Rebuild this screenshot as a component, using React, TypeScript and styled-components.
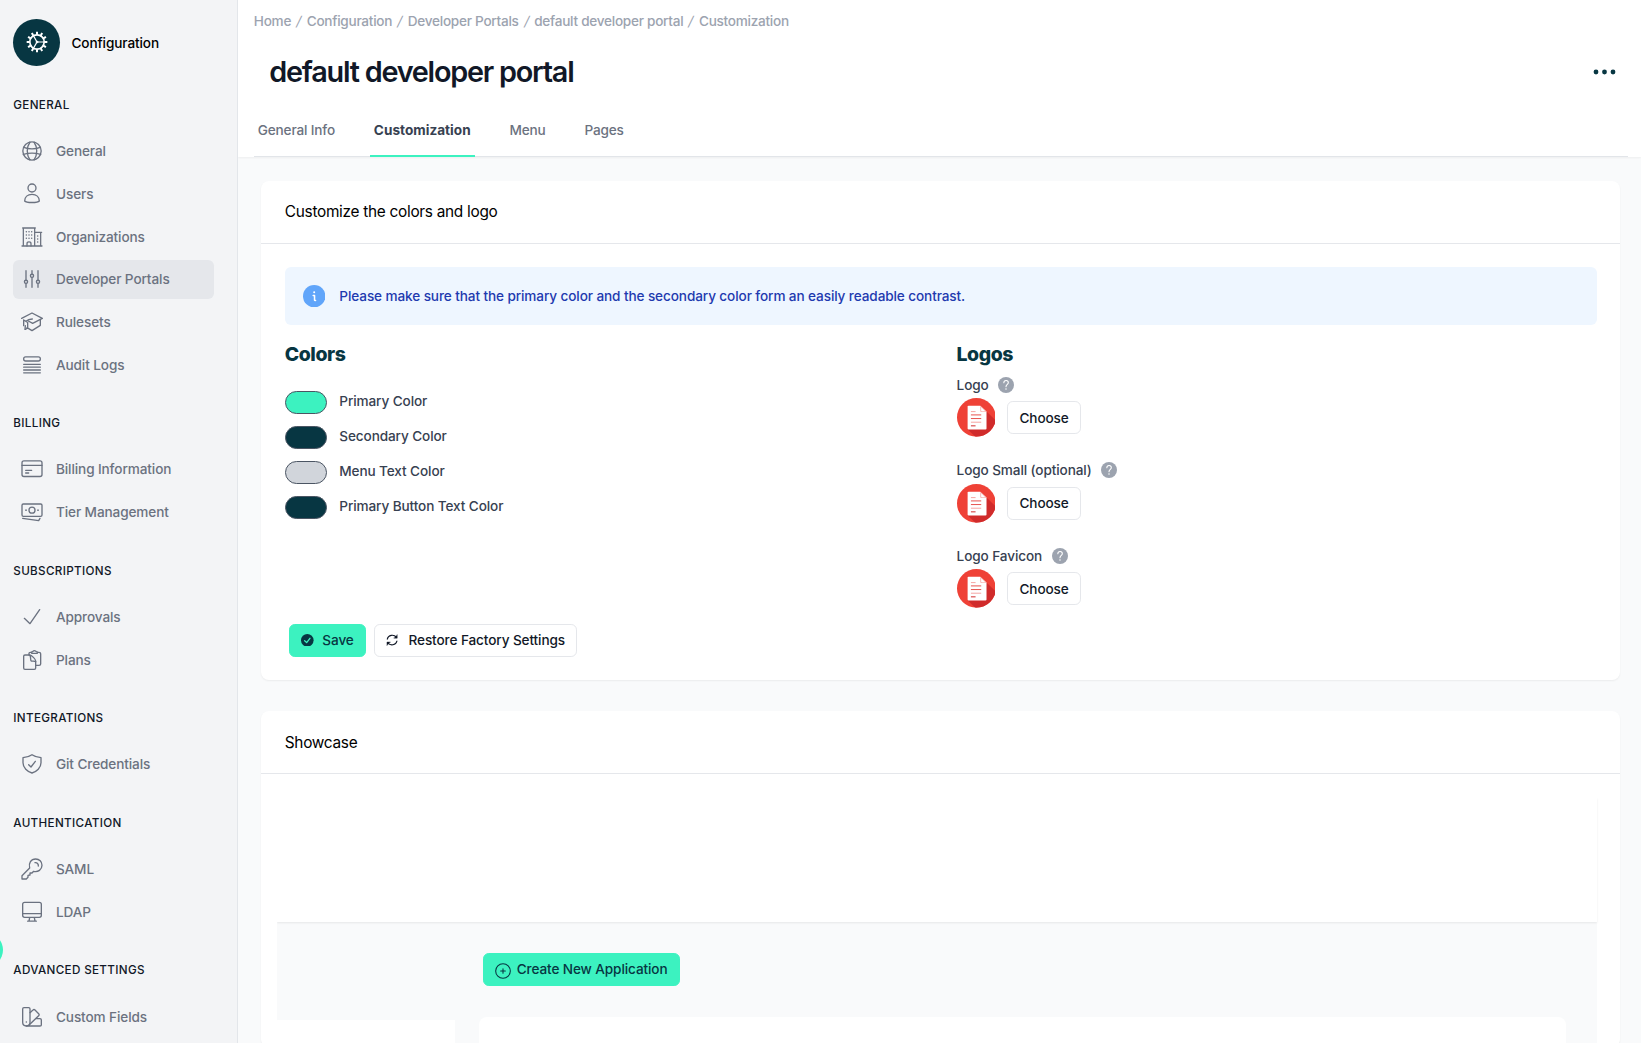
import React from "react";
import styled, { createGlobalStyle } from "styled-components";

const GlobalStyle = createGlobalStyle`
  *, *::before, *::after { box-sizing: border-box; }
  body {
    margin: 0;
    overflow: hidden;
    background: #f9fafb;
    color: #111827;
    font-family: Inter, "Liberation Sans", sans-serif;
    font-size: 13.6px;
    font-weight: 500;
    letter-spacing: -0.11px;
  }
  button { font: inherit; letter-spacing: inherit; margin: 0; }
`;

const Page = styled.div`
  display: grid;
  grid-template-columns: 238.3px 1fr;
  height: 1043px;
  overflow: hidden;
  position: relative;
`;

/* ---------- sidebar ---------- */

const Sidebar = styled.aside`
  background: #f3f4f6;
  border-right: 1px solid #e3e6ea;
  padding: 19px 23px 0 13.3px;
  overflow: hidden;
  min-height: 0;
`;

const Brand = styled.div`
  display: flex;
  align-items: center;
  gap: 11.4px;
  height: 47px;
  margin-bottom: 31.8px;
  color: #000;
`;

const Avatar = styled.span`
  display: flex;
  align-items: center;
  justify-content: center;
  width: 46.8px;
  height: 46.8px;
  border-radius: 50%;
  background: #073642;
  color: #fff;
`;

const Section = styled.section`
  margin-bottom: 32px;
`;

const SectionTitle = styled.h3`
  margin: 0 0 18.5px;
  height: 15.5px;
  line-height: 15.5px;
  font-size: 11.65px;
  font-weight: 500;
  letter-spacing: 0.34px;
  text-transform: uppercase;
  color: #111827;
`;

const NavList = styled.nav`
  display: flex;
  flex-direction: column;
  gap: 3.9px;
`;

const NavItem = styled.a<{ $active?: boolean }>`
  display: flex;
  align-items: center;
  gap: 12.8px;
  height: 38.8px;
  width: 200.7px;
  padding-left: 7.9px;
  border-radius: 5.8px;
  color: #6b7280;
  background: ${(p) => (p.$active ? "#e5e7eb" : "transparent")};
`;

const Beacon = styled.span`
  position: absolute;
  left: -31.2px;
  top: 933px;
  width: 34px;
  height: 34px;
  border-radius: 50%;
  background: #3cf2c0;
`;

/* ---------- header ---------- */

const Main = styled.main`
  display: flex;
  flex-direction: column;
  min-width: 0;
  min-height: 0;
  overflow: hidden;
`;

const Header = styled.header`
  height: 157px;
  flex: none;
  padding: 0 13.5px 0 15.5px;
  background: #fff;
  box-shadow: 0 1px 2px rgba(0, 0, 0, 0.05);
  display: flex;
  flex-direction: column;
`;

const Breadcrumbs = styled.nav`
  display: flex;
  height: 42px;
  align-items: center;
  color: #9ca3af;
  font-weight: 450;
  letter-spacing: -0.27px;
`;

const Slash = styled.span`
  width: 15.6px;
  text-align: center;
  font-size: 13.6px;
  font-weight: 400;
  transform: skewX(-12deg);
`;

const TitleRow = styled.div`
  display: flex;
  align-items: center;
  justify-content: space-between;
  height: 59px;
  padding: 0 11.7px 0 15.5px;
`;

const Title = styled.h1`
  margin: 0;
  font-size: 28.8px;
  font-weight: 600;
  line-height: 35px;
  letter-spacing: -1.23px;
`;

const Tabs = styled.div`
  display: flex;
  gap: 31px;
  height: 56px;
  border-bottom: 1px solid #e2e5e9;
`;

const Tab = styled.a<{ $active?: boolean }>`
  display: flex;
  align-items: center;
  height: 56px;
  padding: 3.4px 3.9px 0;
  border-bottom: 2px solid ${(p) => (p.$active ? "#3cf2c0" : "transparent")};
  color: ${(p) => (p.$active ? "#374151" : "#6b7280")};
  font-weight: ${(p) => (p.$active ? 700 : 500)};
  letter-spacing: ${(p) => (p.$active ? 0.02 : -0.15)}px;
`;

/* ---------- cards ---------- */

const Content = styled.div`
  flex: 1;
  min-height: 0;
  padding: 23.5px 21px 0 23.2px;
`;

const Card = styled.section`
  margin-bottom: 31px;
  background: #fff;
  border-radius: 8px;
  box-shadow: 0 1px 2px rgba(0, 0, 0, 0.06);
`;

const CardTitle = styled.h2<{ $line: number }>`
  margin: 0;
  height: 63px;
  padding: 0 23.3px;
  line-height: ${(p) => p.$line}px;
  font-size: 15.4px;
  font-weight: 400;
  letter-spacing: -0.29px;
  color: #000;
  border-bottom: 1px solid #e5e7eb;
`;

const CardBody = styled.div`
  height: 436.5px;
  padding: 23.5px 23px 0 23.3px;
`;

const Notice = styled.div`
  display: flex;
  align-items: center;
  gap: 14.2px;
  height: 58px;
  padding-left: 18px;
  border-radius: 6px;
  background: #eef6ff;
  color: #1e3aaf;
`;

const Columns = styled.div`
  display: grid;
  grid-template-columns: 671.8px 1fr;
  height: 298.6px;
`;

const GroupTitle = styled.h3<{ $gap: number }>`
  margin: 14.5px 0 ${(p) => p.$gap}px;
  height: 28px;
  line-height: 28px;
  font-size: 19.4px;
  font-weight: 800;
  letter-spacing: -0.42px;
  color: #073642;
`;

const ColorRow = styled.label`
  display: flex;
  gap: 11.8px;
  height: 23px;
  margin-bottom: 12px;
  line-height: 21px;
  color: #374151;
`;

const Swatch = styled.span<{ $color: string }>`
  width: 42.7px;
  height: 23px;
  border: 1px solid #4b5563;
  border-radius: 12px;
  background: ${(p) => p.$color};
`;

const LogoField = styled.div`
  height: 85.5px;
`;

const LogoLabel = styled.div`
  display: flex;
  align-items: center;
  gap: 9.6px;
  height: 19px;
  margin-bottom: 4.4px;
  color: #374151;
`;

const LogoPicker = styled.div`
  display: flex;
  align-items: center;
  gap: 11.7px;
  height: 39px;
`;

const Button = styled.button<{ $primary?: boolean; $gap?: number }>`
  display: inline-flex;
  align-items: center;
  gap: ${(p) => p.$gap ?? 9.6}px;
  height: 33px;
  padding: 0 11.4px;
  border: 1px solid ${(p) => (p.$primary ? "#3cf2c0" : "#e5e7eb")};
  border-radius: 5.8px;
  background: ${(p) => (p.$primary ? "#3cf2c0" : "#fff")};
  color: ${(p) => (p.$primary ? "#073642" : "#111827")};
  white-space: nowrap;
`;

const Actions = styled.div`
  display: flex;
  gap: 7.8px;
  padding-left: 4px;
`;

/* ---------- showcase ---------- */

const Preview = styled.div`
  margin: 23.5px 23px 0 15.5px;
  background: #f9fafb;
`;

const PreviewHeader = styled.div`
  height: 124.9px;
  background: #fff;
  box-shadow: 0 1px 2px rgba(0, 0, 0, 0.08);
  clip-path: inset(0 -3px -3px 0);
`;

const PreviewBody = styled.div`
  display: grid;
  grid-template-columns: 178.5px 1086.6px;
  column-gap: 23.6px;
  height: 125px;
`;

const PreviewAside = styled.div`
  margin-top: 97.5px;
  background: #fff;
`;

const PreviewMain = styled.div`
  display: flex;
  flex-direction: column;
  align-items: flex-start;
  padding-top: 30.3px;

  button { margin-left: 3.6px; }
`;

const PreviewPanel = styled.div`
  width: 100%;
  flex: 1;
  margin-top: 31px;
  border-radius: 8px 8px 0 0;
  background: #fff;
`;

/* ---------- icons ---------- */

const IconSvg = styled.svg`
  flex: none;
  fill: none;
  stroke: currentColor;
  stroke-linecap: round;
  stroke-linejoin: round;
`;

const Icon = ({ children, size = 22, sw = 4 }: { children: React.ReactNode; size?: number; sw?: number }) => (
  <IconSvg width={size} height={size} viewBox="0 0 66 66" strokeWidth={sw}>
    {children}
  </IconSvg>
);

const teeth = Array.from({ length: 12 }, (_, i) => i * 30);

const GearIcon = () => (
  <Icon sw={5}>
    <circle cx="33" cy="33" r="21.500" />
    {teeth.map((a) => (
      <path key={a} d="M33 11V2" strokeWidth="6" strokeLinecap="butt" transform={`rotate(${a} 33 33)`} />
    ))}
    <path d="M33 33H53M33 33L23 15.500M33 33L23 50.500" strokeWidth="3.600" />
    <circle cx="33" cy="33" r="3" fill="currentColor" strokeWidth="2" />
  </Icon>
);

const GlobeIcon = () => (
  <Icon>
    <circle cx="33" cy="33" r="27.500" />
    <path d="M27 6C16 22 16 44 27 60M39 6C50 22 50 44 39 60" />
    <path d="M8 22C22 27 44 27 58 22M7 43C22 39 44 39 59 43" />
  </Icon>
);

const UserIcon = () => (
  <Icon>
    <circle cx="33" cy="15" r="12" />
    <path d="M11 54C11 42 20 34 33 34S55 42 55 54C50 60 16 60 11 54Z" />
  </Icon>
);

const BuildingIcon = () => (
  <Icon sw={3.8}>
    <path d="M3 60H63M7 60V6H41V60M5 6H43M41 19H59V60M41 19H62" />
    <path d="M18 60V53C18 46 30 46 30 53V60" />
    <path d="M16 17h.1M24 17h.1M32 17h.1M16 27h.1M24 27h.1M32 27h.1M16 37h.1M24 37h.1M32 37h.1M50 30h.1M50 39h.1M50 48h.1" strokeWidth="4.500" />
  </Icon>
);

const SlidersIcon = () => (
  <Icon>
    <path d="M15 8V36M15 47V58M33 8V18M33 29V58M51 8V36M51 47V58" />
    <circle cx="15" cy="41.500" r="4.800" />
    <circle cx="33" cy="23.500" r="4.800" />
    <circle cx="51" cy="41.500" r="4.800" />
  </Icon>
);

const CapIcon = () => (
  <Icon>
    <path d="M2 22L33 6L64 22L35 37L22 30" />
    <path d="M58 27V43L33 59L18 50M8 27V44M8 27L20 34V51L13 55M34 24C26 24 20 26 15 31" />
    <path d="M13 44L12 55" />
  </Icon>
);

const LogsIcon = () => (
  <Icon>
    <rect x="8" y="8.500" width="50" height="12.500" rx="6" />
    <path d="M8 31H58M8 39.500H58M8 48H58M8 56.500H58" />
  </Icon>
);

const CreditCardIcon = () => (
  <Icon>
    <rect x="3" y="8.500" width="60" height="47" rx="6" />
    <path d="M3 22H63M14 37H32M14 45H23" />
  </Icon>
);

const CashIcon = () => (
  <Icon>
    <rect x="3" y="9" width="60" height="37" rx="4" />
    <circle cx="33" cy="27.500" r="9" />
    <path d="M15 27.500h.1M51 27.500h.1" strokeWidth="5" />
    <path d="M5 52L53 59L57 52" />
  </Icon>
);

const CheckIcon = () => (
  <Icon>
    <path d="M10 37L27 53L56 11" />
  </Icon>
);

const PlansIcon = () => (
  <Icon>
    <path d="M26 18H12C9 18 8 19 8 22V57C8 60 9 61 12 61H40C43 61 44 60 44 57V36C44 31 32 18 26 18Z" />
    <path d="M27 19C30 25 28 33 30 35S39 36 44 38M24 18V13C24 11 26 10 28 10H31M50 10H54C57 10 59 11 59 14V45C59 48 57 49 54 49H45" />
    <path d="M32 13V9C35 9 36 5 40 5S45 9 49 9V13Z" />
  </Icon>
);

const ShieldIcon = () => (
  <Icon>
    <path d="M33 5C25 11 15 13 6 14V29C6 44 19 56 33 60C47 56 60 44 60 29V14C51 13 41 11 33 5Z" />
    <path d="M23 35L30 42L43 25" />
  </Icon>
);

const KeyIcon = () => (
  <Icon>
    <path d="M3 63V53L26 30C22 15 30 3 44 3C55 3 63 11 63 22C63 35 51 43 38 40L33 45H27V51L21 52V58L16 63Z" />
    <path d="M42 14C48 13 53 18 52 24" />
  </Icon>
);

const MonitorIcon = () => (
  <Icon>
    <rect x="5" y="4" width="56" height="45" rx="6" />
    <path d="M5 38H61M26 50L24 60M40 50L42 60M20 60.500H46" />
  </Icon>
);

const SwatchesIcon = () => (
  <Icon>
    <path d="M9 5H23C26 5 27 6 27 9V49C27 56 23 60 16 60S5 56 5 49V9C5 6 6 5 9 5Z" />
    <path d="M27 20L36 12C38 10 40 10 42 12L53 23C55 25 55 27 53 29L25 56M44 38H57C60 38 61 39 61 42V57C61 60 60 60 57 60H16" />
    <path d="M16 48h.1" strokeWidth="4.500" />
  </Icon>
);

const InfoIcon = () => (
  <IconSvg width="22.4" height="22.4" viewBox="0 0 66 66">
    <circle cx="33" cy="33" r="33" fill="#60a5fa" stroke="none" />
    <circle cx="33" cy="21.500" r="3" fill="#fff" stroke="none" />
    <path d="M30 31H34V45C34 46 35 46 37 46" stroke="#fff" strokeWidth="4.500" />
  </IconSvg>
);

const HelpIcon = () => (
  <IconSvg width="16" height="16" viewBox="0 0 48 48">
    <circle cx="24" cy="24" r="24" fill="#9ca3af" stroke="none" />
    <path d="M17.500 17C18 8 31 9 31 17C31 22 24 22 24 29" stroke="#fff" strokeWidth="3.200" />
    <circle cx="24" cy="36" r="2.300" fill="#fff" stroke="none" />
  </IconSvg>
);

const DocumentLogo = () => (
  <IconSvg width="38.8" height="38.8" viewBox="0 0 117 117">
    <defs>
      <clipPath id="disc"><circle cx="58.500" cy="58.500" r="58.500" /></clipPath>
    </defs>
    <g clipPath="url(#disc)" stroke="none">
      <rect width="117" height="117" fill="#ef4136" />
      <path d="M89 41L117 68V117H55L32 94Z" fill="#d02b2b" />
      <path d="M35 23H70L89 41V92C89 94 88 95 86 95H35C33 95 32 94 32 92V26C32 24 33 23 35 23Z" fill="#fff" />
      <path d="M70 23L89 42H73C71 42 70 41 70 39Z" fill="#f7b9b6" />
      <path d="M73 28L85 40H75C73 40 73 39 73 38Z" fill="#fff" />
    </g>
    <g strokeWidth="3" strokeLinecap="butt">
      <path d="M42 41H56M42 73H73" stroke="#f5a5a1" />
      <path d="M42 51H73M42 62H73" stroke="#e6524e" />
      <path d="M42 84H56" stroke="#d02b2b" />
    </g>
  </IconSvg>
);

const CheckBadgeIcon = () => (
  <IconSvg width="12.6" height="12.6" viewBox="0 0 38 38">
    <circle cx="19" cy="19" r="19" fill="#073642" stroke="none" />
    <path d="M11 20.500L17 26L27 13" stroke="#3cf2c0" strokeWidth="4" />
  </IconSvg>
);

const RefreshIcon = () => (
  <IconSvg width="12.2" height="12.2" viewBox="0 0 38 38" strokeWidth="3.400">
    <path d="M4 16C7 3 24 0 32 10M34 22C31 35 14 38 6 28" />
    <path d="M35 3V13H25ZM3 35V25H13Z" fill="currentColor" strokeWidth="1.200" />
  </IconSvg>
);

const PlusCircle = styled(IconSvg)`
  position: relative;
  top: 2px;
`;

const PlusCircleIcon = () => (
  <PlusCircle width="16" height="16" viewBox="0 0 48 48" strokeWidth="3.200">
    <circle cx="24" cy="24" r="22" />
    <path d="M24 17V31M17 24H31" />
  </PlusCircle>
);

const MoreIcon = () => (
  <IconSvg width="23" height="6" viewBox="0 0 23 6">
    <g fill="#073642" stroke="none">
      <circle cx="3" cy="3" r="2.400" />
      <circle cx="11.500" cy="3" r="2.400" />
      <circle cx="20" cy="3" r="2.400" />
    </g>
  </IconSvg>
);

/* ---------- data ---------- */

const sections = [
  {
    title: "General",
    items: [
      { label: "General", icon: <GlobeIcon /> },
      { label: "Users", icon: <UserIcon /> },
      { label: "Organizations", icon: <BuildingIcon /> },
      { label: "Developer Portals", icon: <SlidersIcon />, active: true },
      { label: "Rulesets", icon: <CapIcon /> },
      { label: "Audit Logs", icon: <LogsIcon /> },
    ],
  },
  {
    title: "Billing",
    items: [
      { label: "Billing Information", icon: <CreditCardIcon /> },
      { label: "Tier Management", icon: <CashIcon /> },
    ],
  },
  {
    title: "Subscriptions",
    items: [
      { label: "Approvals", icon: <CheckIcon /> },
      { label: "Plans", icon: <PlansIcon /> },
    ],
  },
  { title: "Integrations", items: [{ label: "Git Credentials", icon: <ShieldIcon /> }] },
  {
    title: "Authentication",
    items: [
      { label: "SAML", icon: <KeyIcon /> },
      { label: "LDAP", icon: <MonitorIcon /> },
    ],
  },
  { title: "Advanced Settings", items: [{ label: "Custom Fields", icon: <SwatchesIcon /> }] },
] as { title: string; items: { label: string; icon: React.ReactNode; active?: boolean }[] }[];

const crumbs = ["Home", "Configuration", "Developer Portals", "default developer portal", "Customization"];
const tabs = ["General Info", "Customization", "Menu", "Pages"];
const colors = [
  { label: "Primary Color", value: "#3cf2c0" },
  { label: "Secondary Color", value: "#073642" },
  { label: "Menu Text Color", value: "#d1d5db" },
  { label: "Primary Button Text Color", value: "#073642" },
];
const logos = ["Logo", "Logo Small (optional)", "Logo Favicon"];

export default function App() {
  return (
    <>
      <GlobalStyle />
      <Page>
        <Sidebar>
          <Brand>
            <Avatar><GearIcon /></Avatar>
            Configuration
          </Brand>
          {sections.map((s) => (
            <Section key={s.title}>
              <SectionTitle>{s.title}</SectionTitle>
              <NavList>
                {s.items.map((i) => (
                  <NavItem key={i.label} $active={i.active}>
                    {i.icon}
                    {i.label}
                  </NavItem>
                ))}
              </NavList>
            </Section>
          ))}
        </Sidebar>
        <Main>
          <Header>
            <Breadcrumbs>
              {crumbs.map((c, i) => (
                <React.Fragment key={c}>
                  {i > 0 && <Slash>/</Slash>}
                  <span>{c}</span>
                </React.Fragment>
              ))}
            </Breadcrumbs>
            <TitleRow>
              <Title>default developer portal</Title>
              <MoreIcon />
            </TitleRow>
            <Tabs>
              {tabs.map((t) => (
                <Tab key={t} $active={t === "Customization"}>{t}</Tab>
              ))}
            </Tabs>
          </Header>
          <Content>
            <Card>
              <CardTitle $line={62}>Customize the colors and logo</CardTitle>
              <CardBody>
                <Notice>
                  <InfoIcon />
                  Please make sure that the primary color and the secondary color form an easily readable contrast.
                </Notice>
                <Columns>
                  <div>
                    <GroupTitle $gap={23.5}>Colors</GroupTitle>
                    {colors.map((c) => (
                      <ColorRow key={c.label}>
                        <Swatch $color={c.value} />
                        {c.label}
                      </ColorRow>
                    ))}
                  </div>
                  <div>
                    <GroupTitle $gap={7.5}>Logos</GroupTitle>
                    {logos.map((l) => (
                      <LogoField key={l}>
                        <LogoLabel>
                          {l}
                          <HelpIcon />
                        </LogoLabel>
                        <LogoPicker>
                          <DocumentLogo />
                          <Button>Choose</Button>
                        </LogoPicker>
                      </LogoField>
                    ))}
                  </div>
                </Columns>
                <Actions>
                  <Button $primary $gap={8.6}><CheckBadgeIcon />Save</Button>
                  <Button $gap={10}><RefreshIcon />Restore Factory Settings</Button>
                </Actions>
              </CardBody>
            </Card>
            <Card>
              <CardTitle $line={63}>Showcase</CardTitle>
              <Preview>
                <PreviewHeader />
                <PreviewBody>
                  <PreviewAside />
                  <PreviewMain>
                    <Button $primary $gap={5.6}><PlusCircleIcon />Create New Application</Button>
                    <PreviewPanel />
                  </PreviewMain>
                </PreviewBody>
              </Preview>
            </Card>
          </Content>
        </Main>
        <Beacon />
      </Page>
    </>
  );
}
